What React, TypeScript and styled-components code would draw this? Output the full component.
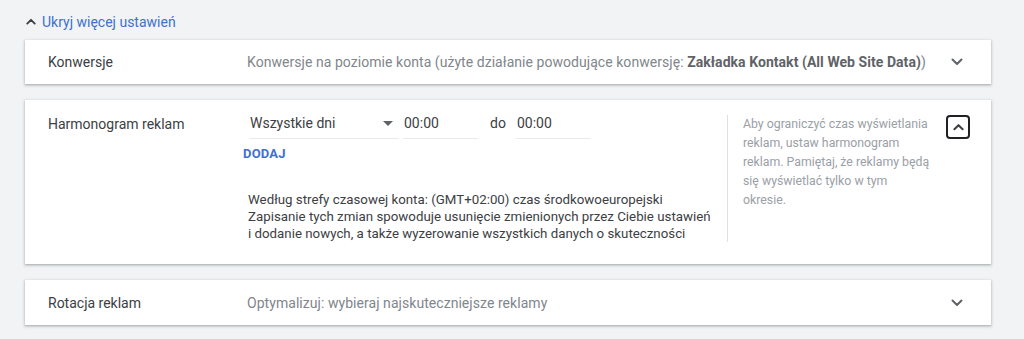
import React from "react";
import styled, { createGlobalStyle } from "styled-components";

const Global = createGlobalStyle`
  html, body { margin: 0; padding: 0; background: #f1f3f4; }
  body { font-family: Roboto, "Noto Sans", Arial, sans-serif; -webkit-font-smoothing: antialiased; }
`;

const Page = styled.div`
  width: 1024px;
  height: 339px;
  box-sizing: border-box;
  padding: 11px 33px 0 25px;
  overflow: hidden;
`;

const ToggleLink = styled.div`
  display: flex;
  align-items: center;
  gap: 6px;
  height: 21px;
  margin: 0 0 8px 1px;
  color: #4170cf;
  font-size: 14px;
  cursor: pointer;
`;

const LinkIcon = styled.span`
  display: flex;
  color: #3c4043;
`;

const List = styled.div`
  display: flex;
  flex-direction: column;
  gap: 16px;
`;

const Card = styled.div`
  background: #fff;
  box-shadow: 0 1px 2px rgba(60, 64, 67, 0.3), 0 1px 3px 1px rgba(60, 64, 67, 0.12);
`;

const Row = styled.div<{ $h: number }>`
  display: flex;
  align-items: center;
  height: ${(p) => p.$h}px;
  padding-left: 23px;
`;

const Label = styled.div<{ $w: number }>`
  width: ${(p) => p.$w}px;
  flex: none;
  color: #3c4043;
  font-size: 14px;
  line-height: 18px;
`;

const Value = styled.div`
  flex: 1;
  color: #80868b;
  font-size: 14px;
  letter-spacing: 0.05px;
  white-space: nowrap;
  b {
    color: #5f6368;
    font-weight: 700;
  }
`;

const IconBtn = styled.div<{ $boxed?: boolean }>`
  width: 24px;
  height: 24px;
  box-sizing: border-box;
  flex: none;
  margin-right: 22px;
  display: flex;
  align-items: center;
  justify-content: center;
  border: ${(p) => (p.$boxed ? "2px solid #202124" : "none")};
  border-radius: 4px;
  color: ${(p) => (p.$boxed ? "#3c4043" : "#5f6368")};
`;

const Expanded = styled.div`
  display: flex;
  align-items: flex-start;
  padding: 15px 0 22px 23px;
`;

const Editor = styled.div`
  width: 484px;
  flex: none;
  display: flex;
  flex-direction: column;
`;

const FieldRow = styled.div`
  display: flex;
  align-items: flex-end;
  padding-left: 6px;
`;

const Field = styled.div<{ $w: number; $ml?: number }>`
  width: ${(p) => p.$w}px;
  margin-left: ${(p) => p.$ml ?? 0}px;
  box-sizing: border-box;
  display: flex;
  align-items: center;
  justify-content: space-between;
  padding: 0 2px 7px 1px;
  border-bottom: 1px solid #e8eaed;
  color: #3c4043;
  font-size: 14px;
  line-height: 16px;
`;

const Caret = styled.span`
  width: 0;
  height: 0;
  border-left: 5px solid transparent;
  border-right: 5px solid transparent;
  border-top: 5px solid #5f6368;
  margin-right: 4px;
`;

const Sep = styled.span`
  color: #3c4043;
  font-size: 14px;
  line-height: 16px;
  padding: 0 10px 8px 12px;
`;

const AddButton = styled.div`
  margin-top: 8px;
  color: #4170cf;
  font-size: 13px;
  font-weight: 700;
  line-height: 14px;
  letter-spacing: 0.2px;
`;

const Note = styled.div`
  margin-top: 30px;
  padding-left: 5px;
  color: #3c4043;
  font-size: 13.3px;
  line-height: 17px;
  white-space: nowrap;
`;

const Help = styled.div`
  width: 188px;
  flex: none;
  margin-right: 15px;
  padding-left: 15px;
  border-left: 1px solid #e0e0e0;
  color: #9aa0a6;
  font-size: 12.3px;
  line-height: 19px;
  min-height: 127px;
`;

const ChevronDown = () => (
  <svg width="12" height="8" viewBox="0 0 12 8" fill="none" stroke="currentColor" strokeWidth="2" strokeLinecap="round" strokeLinejoin="round">
    <path d="M1.5 1.5l4.5 4.5 4.5-4.5" />
  </svg>
);

const ChevronUp = ({ w, h, sw }: { w: number; h: number; sw: number }) => (
  <svg width={w} height={h} viewBox="0 0 12 8" fill="none" stroke="currentColor" strokeWidth={sw} strokeLinecap="round" strokeLinejoin="round">
    <path d="M1.5 6.5l4.5-4.5 4.5 4.5" />
  </svg>
);

export default function App() {
  return (
    <>
      <Global />
      <Page>
        <ToggleLink>
          <LinkIcon>
            <ChevronUp w={10} h={7} sw={2.2} />
          </LinkIcon>
          Ukryj więcej ustawień
        </ToggleLink>
        <List>
          <Card>
            <Row $h={44}>
              <Label $w={199}>Konwersje</Label>
              <Value>
                Konwersje na poziomie konta (użyte działanie powodujące konwersję: <b>Zakładka Kontakt (All Web Site Data)</b>)
              </Value>
              <IconBtn>
                <ChevronDown />
              </IconBtn>
            </Row>
          </Card>
          <Card>
            <Expanded>
              <Label $w={195}>Harmonogram reklam</Label>
              <Editor>
                <FieldRow>
                  <Field $w={150}>
                    <span>Wszystkie dni</span>
                    <Caret />
                  </Field>
                  <Field $w={75} $ml={4}>
                    00:00
                  </Field>
                  <Sep>do</Sep>
                  <Field $w={75}>00:00</Field>
                </FieldRow>
                <AddButton>DODAJ</AddButton>
                <Note>
                  Według strefy czasowej konta: (GMT+02:00) czas środkowoeuropejski
                  <br />
                  Zapisanie tych zmian spowoduje usunięcie zmienionych przez Ciebie ustawień
                  <br />
                  i dodanie nowych, a także wyzerowanie wszystkich danych o skuteczności
                </Note>
              </Editor>
              <Help>
                Aby ograniczyć czas wyświetlania reklam, ustaw harmonogram reklam. Pamiętaj, że reklamy będą się wyświetlać tylko w tym okresie.
              </Help>
              <IconBtn $boxed>
                <ChevronUp w={11} h={8} sw={2.2} />
              </IconBtn>
            </Expanded>
          </Card>
          <Card>
            <Row $h={45}>
              <Label $w={199}>Rotacja reklam</Label>
              <Value>Optymalizuj: wybieraj najskuteczniejsze reklamy</Value>
              <IconBtn>
                <ChevronDown />
              </IconBtn>
            </Row>
          </Card>
        </List>
      </Page>
    </>
  );
}
